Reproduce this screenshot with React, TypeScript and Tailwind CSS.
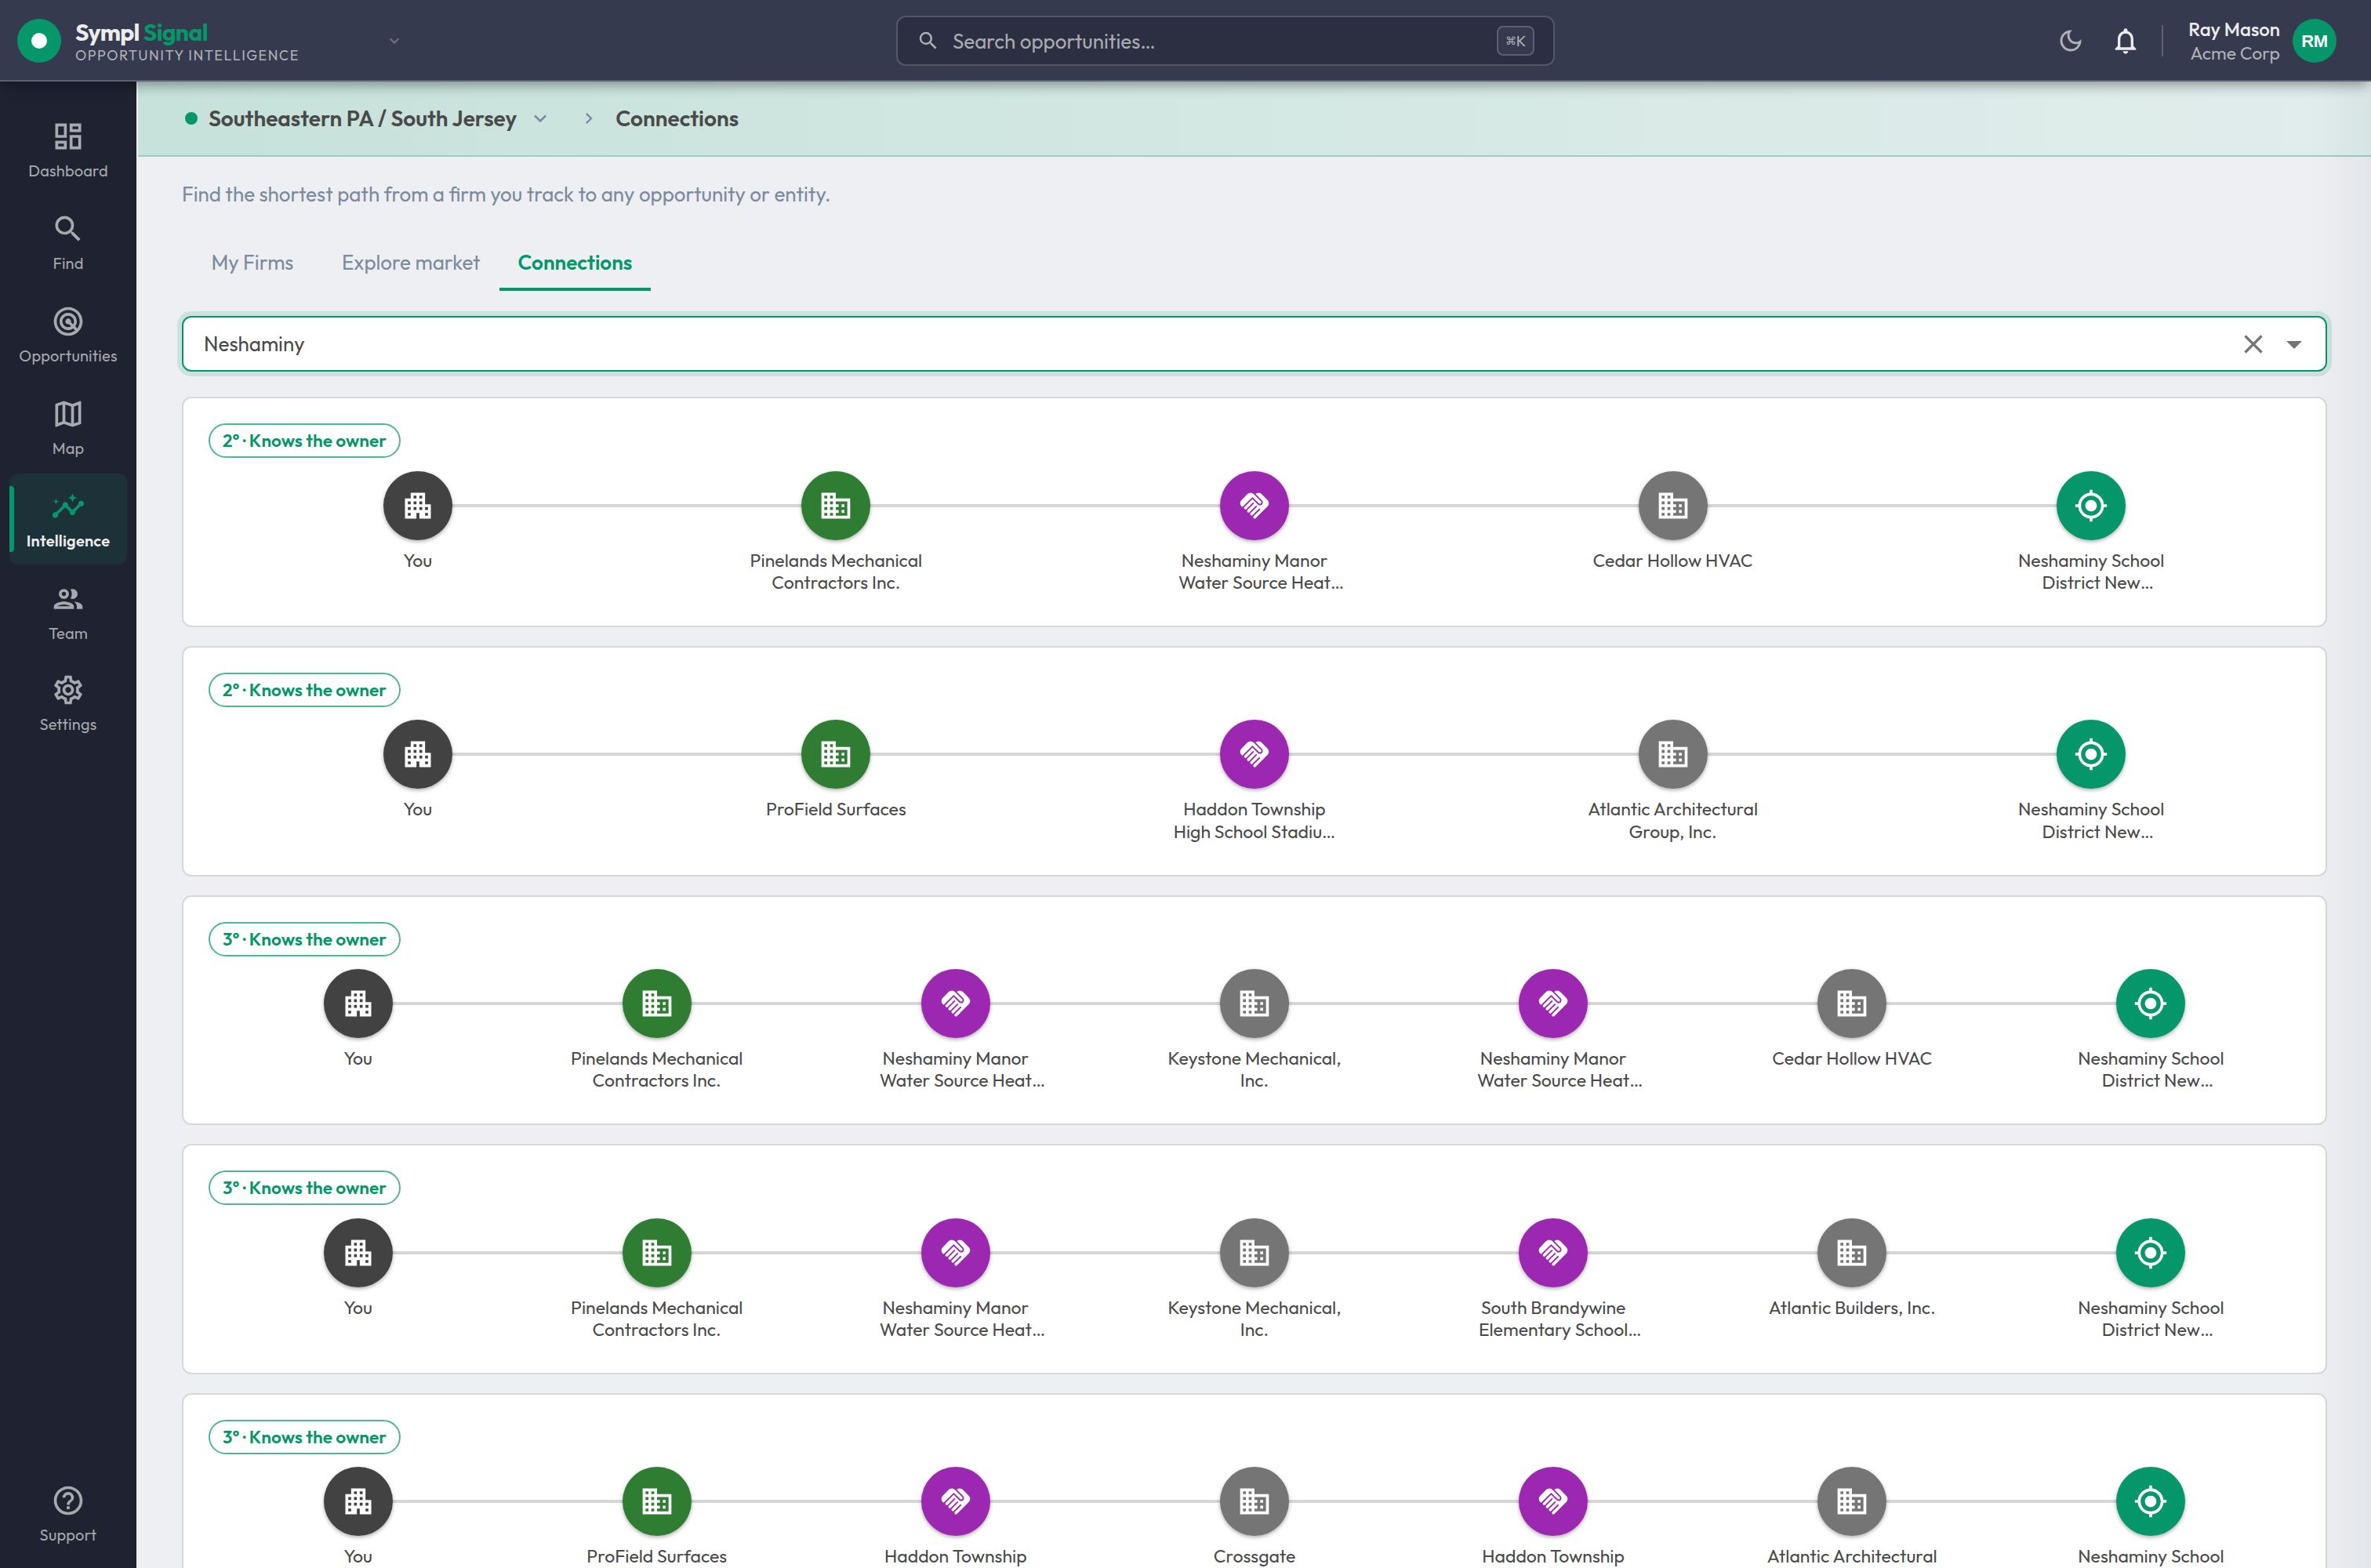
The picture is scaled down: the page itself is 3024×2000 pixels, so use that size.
import type { IconType } from "react-icons";
import {
  MdApartment,
  MdArrowDropDown,
  MdBusiness,
  MdChevronRight,
  MdClose,
  MdHandshake,
  MdHelpOutline,
  MdInsights,
  MdKeyboardArrowDown,
  MdMyLocation,
  MdNotificationsNone,
  MdOutlineDarkMode,
  MdOutlineDashboard,
  MdOutlineGroup,
  MdOutlineMap,
  MdOutlineSettings,
  MdRadar,
  MdSearch,
} from "react-icons/md";
import clsx from "clsx";

type NodeKind = "you" | "firm" | "project" | "company" | "target";

type PathNode = {
  kind: NodeKind;
  lines: string[];
  clipped?: boolean;
};

type Path = {
  degree: number;
  nodes: PathNode[];
};

const kindStyles: Record<NodeKind, { icon: IconType; bg: string }> = {
  you: { icon: MdApartment, bg: "bg-[#424242]" },
  firm: { icon: MdBusiness, bg: "bg-[#2e7d32]" },
  project: { icon: MdHandshake, bg: "bg-[#9c27b0]" },
  company: { icon: MdBusiness, bg: "bg-[#757575]" },
  target: { icon: MdMyLocation, bg: "bg-[#059669]" },
};

const you: PathNode = { kind: "you", lines: ["You"] };
const pinelands: PathNode = { kind: "firm", lines: ["Pinelands Mechanical", "Contractors Inc."] };
const proField: PathNode = { kind: "firm", lines: ["ProField Surfaces"] };
const manor: PathNode = { kind: "project", lines: ["Neshaminy Manor", "Water Source Heat"], clipped: true };
const haddon: PathNode = { kind: "project", lines: ["Haddon Township", "High School Stadiu…"] };
const brandywine: PathNode = { kind: "project", lines: ["South Brandywine", "Elementary School"], clipped: true };
const keystone: PathNode = { kind: "company", lines: ["Keystone Mechanical,", "Inc."] };
const cedar: PathNode = { kind: "company", lines: ["Cedar Hollow HVAC"] };
const atlanticArch: PathNode = { kind: "company", lines: ["Atlantic Architectural", "Group, Inc."] };
const atlanticBuilders: PathNode = { kind: "company", lines: ["Atlantic Builders, Inc."] };
const crossgate: PathNode = { kind: "company", lines: ["Crossgate"] };
const school: PathNode = { kind: "target", lines: ["Neshaminy School", "District New"], clipped: true };

const paths: Path[] = [
  { degree: 2, nodes: [you, pinelands, manor, cedar, school] },
  { degree: 2, nodes: [you, proField, haddon, atlanticArch, school] },
  { degree: 3, nodes: [you, pinelands, manor, keystone, manor, cedar, school] },
  { degree: 3, nodes: [you, pinelands, manor, keystone, brandywine, atlanticBuilders, school] },
  { degree: 3, nodes: [you, proField, haddon, crossgate, haddon, atlanticArch, school] },
];

const navItems: { label: string; icon: IconType }[] = [
  { label: "Dashboard", icon: MdOutlineDashboard },
  { label: "Find", icon: MdSearch },
  { label: "Opportunities", icon: MdRadar },
  { label: "Map", icon: MdOutlineMap },
  { label: "Intelligence", icon: MdInsights },
  { label: "Team", icon: MdOutlineGroup },
  { label: "Settings", icon: MdOutlineSettings },
];

function Header() {
  return (
    <header className="relative z-20 flex h-[104px] shrink-0 items-center border-b-2 border-[#5d6075] bg-[#363a4e] pt-[2px] shadow-[0_8px_16px_-4px_rgba(0,0,0,0.4)]">
      <div className="flex w-[1143px] shrink-0 items-center pl-[22px]">
        <div className="flex w-[493px] items-center">
          <div className="flex size-14 items-center justify-center rounded-full bg-[#059669]">
            <div className="size-5 rounded-full bg-white" />
          </div>
          <div className="ml-[18px] pt-[2px]">
            <div className="text-[30px] leading-[36px] font-bold tracking-[-0.6px] text-[#ececee]">
              Sympl <span className="text-[#059669]">Signal</span>
            </div>
            <div className="text-[18px] leading-[24px] tracking-[1.44px] text-[#afb0b8]">
              OPPORTUNITY INTELLIGENCE
            </div>
          </div>
          <MdKeyboardArrowDown className="ml-auto size-6 text-[#72758a]" />
        </div>
      </div>

      <div className="flex h-16 w-[840px] items-center rounded-xl border-2 border-[#535666] bg-[#2c2e41] px-6">
        <MdSearch className="size-[30px] text-[#b0b1b8]" />
        <span className="ml-4 text-[26px] text-[#a9aab2]">Search opportunities…</span>
        <kbd className="ml-auto flex h-[38px] w-12 items-center justify-center rounded-lg border-2 border-[#5d6075] bg-[#363a4e] font-[Outfit,Lato,sans-serif] text-[19px] text-[#b0b1b8]">
          <span className="text-[14px]">⌘</span>K
        </kbd>
      </div>

      <div className="ml-auto flex items-center pr-11">
        <button className="flex w-[70px] justify-center text-[#afb0b8]">
          <MdOutlineDarkMode className="size-9" />
        </button>
        <button className="flex w-[70px] justify-center text-[#ececee]">
          <MdNotificationsNone className="size-10" />
        </button>
        <div className="ml-[11px] h-10 w-[2px] bg-[#5d6075]" />
        <div className="ml-8 pt-[2px] text-right">
          <div className="text-[24px] leading-[30px] font-medium text-[#ececee]">Ray Mason</div>
          <div className="text-[23px] leading-[32px] text-[#afb0b8]">Acme Corp</div>
        </div>
        <div className="ml-4 flex size-14 items-center justify-center rounded-full bg-[#059669] font-[family-name:'Liberation_Sans',Arial,sans-serif] text-[22px] font-bold tracking-[-0.4px] text-white">
          RM
        </div>
      </div>
    </header>
  );
}

function NavItem({ label, icon: Icon, active }: { label: string; icon: IconType; active?: boolean }) {
  return (
    <a
      className={clsx(
        "relative flex h-[116px] w-[150px] flex-col items-center rounded-xl pt-5",
        active && "bg-[#1d3138]",
        label === "Settings" && "-mt-[2px]"
      )}
    >
      {active && <span className="absolute top-4 left-0 h-[84px] w-[6px] rounded-r-[4px] bg-[#059669]" />}
      <Icon className={clsx("size-11", active ? "text-[#059669]" : "text-[#a8a9af]")} />
      <span
        className={clsx(
          "mt-[7px] text-[20px] leading-[30px] tracking-[0.2px]",
          active ? "font-semibold text-[#ececee]" : "text-[#a6a7ad]"
        )}
      >
        {label}
      </span>
    </a>
  );
}

function Sidebar() {
  return (
    <nav className="flex w-[176px] shrink-0 flex-col justify-between border-r-2 border-[#f0eff2] bg-[#1f2230] px-3 pt-7 pb-3">
      <div className="flex flex-col gap-[2px]">
        {navItems.map((item) => (
          <NavItem key={item.label} {...item} active={item.label === "Intelligence"} />
        ))}
      </div>
      <NavItem label="Support" icon={MdHelpOutline} />
    </nav>
  );
}

function PathStep({ node, last }: { node: PathNode; last: boolean }) {
  const { icon: Icon, bg } = kindStyles[node.kind];
  return (
    <div className="relative flex min-w-0 flex-1 flex-col items-center">
      {/* connector runs to the centre of the next step */}
      {!last && <div className="absolute top-[42px] left-1/2 h-1 w-full bg-[#d6d6d6]" />}
      <div
        className={clsx(
          "relative z-10 flex size-[88px] items-center justify-center rounded-full shadow-[0_2px_5px_rgba(0,0,0,0.32)]",
          bg
        )}
      >
        <Icon className="size-11 text-white" />
      </div>
      <div className="mt-3 text-center text-[23.04px] leading-[28.3px] whitespace-nowrap text-[#4a4a4a]">
        {node.lines.map((line, i) => (
          <div key={line}>
            {line}
            {node.clipped && i === node.lines.length - 1 && <span className="inline-block w-0">…</span>}
          </div>
        ))}
      </div>
    </div>
  );
}

function PathCard({ path }: { path: Path }) {
  return (
    <section className="h-[293.6px] shrink-0 rounded-xl border-2 border-[#d8d8d9] bg-white p-8">
      <div className="flex h-11 w-[245px] items-center justify-center rounded-full border-2 border-[#50b496] text-[22.6px] font-semibold whitespace-nowrap text-[#059669]">
        {path.degree}° · Knows the owner
      </div>
      <div className="mt-[16.4px] flex">
        {path.nodes.map((node, i) => (
          <PathStep key={i} node={node} last={i === path.nodes.length - 1} />
        ))}
      </div>
    </section>
  );
}

function App() {
  return (
    <div className="flex h-[2000px] w-[3024px] flex-col overflow-hidden bg-[#eeeff3] font-[Outfit,Lato,sans-serif]">
      <Header />
      <div className="flex min-h-0 flex-1">
        <Sidebar />
        <main className="relative flex min-w-0 flex-1 flex-col overflow-hidden">
          <div className="flex h-24 shrink-0 items-center border-b-2 border-[#9bd0c0] bg-linear-to-r from-[#c6e2da] to-[#e1edec] pl-[60px] text-[28px] font-semibold text-[#4a4a4a]">
            <span className="size-4 rounded-full bg-[#059669]" />
            <span className="ml-[14px]">Southeastern PA / South Jersey</span>
            <MdKeyboardArrowDown className="ml-[14px] size-8 text-[#7b8a9e]" />
            <MdChevronRight className="ml-8 size-7 text-[#7b8a9e]" />
            <span className="ml-5">Connections</span>
          </div>

          <div className="flex flex-col px-14 pt-7">
            <p className="text-[26px] leading-[39px] text-[#7b8a9e]">
              Find the shortest path from a firm you track to any opportunity or entity.
            </p>

            <div className="mt-8 flex h-[72px] text-[26px] text-[#7b8a9e]">
              <button className="min-w-[180px] px-6 pb-px">My Firms</button>
              <button className="px-6 pb-px">Explore market</button>
              <button className="border-b-4 border-[#059669] px-6 pt-[3px] font-semibold text-[#059669]">
                Connections
              </button>
            </div>

            <div className="mt-8 flex h-[71px] items-center rounded-xl border-2 border-[#059669] bg-white pr-4 pl-[26px] text-[26px] text-[#4a4a4a] shadow-[0_0_0_6px_#cbe2dd]">
              <span className="flex-1">Neshaminy</span>
              <MdClose className="size-10 text-[#757575]" />
              <MdArrowDropDown className="ml-2 size-12 text-[#757575]" />
            </div>

            <div className="mt-[32.4px] flex flex-col gap-6">
              {paths.map((path, i) => (
                <PathCard key={i} path={path} />
              ))}
            </div>
          </div>

          <div className="pointer-events-none absolute inset-y-0 right-0 w-20 bg-linear-to-r from-transparent to-[#0b3b3a]/5" />
        </main>
      </div>
    </div>
  );
}

export default App;
